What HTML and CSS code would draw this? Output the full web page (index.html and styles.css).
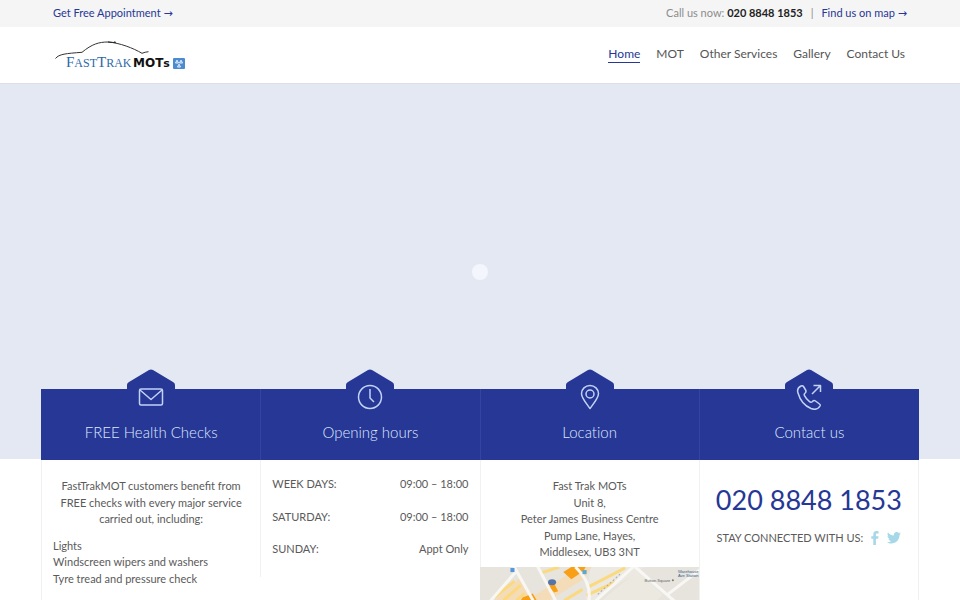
FILE: index.html
```html
<!DOCTYPE html>
<html lang="en">
<head>
<meta charset="utf-8">
<meta name="viewport" content="width=device-width, initial-scale=1">
<title>Fast Trak MOTs</title>
<link rel="stylesheet" href="styles.css">
</head>
<body>
<div class="topbar">
  <div class="wrap topbar-row">
    <a href="#appointment">Get Free Appointment <span class="arrow">→</span></a>
    <div class="topbar-right">
      <span>Call us now: <strong>020 8848 1853</strong></span>
      <span class="divider">|</span>
      <a href="#map">Find us on map <span class="arrow">→</span></a>
    </div>
  </div>
</div>
<header class="header">
  <div class="wrap header-row">
    <a class="logo" href="#home" aria-label="FastTrak MOTs">
      <svg width="134" height="32" viewBox="0 0 134 32">
        <path d="M1.500 19.500C5 15 12 14.500 28 13.300C38 5 45 3 54 3C66 4 79 9 88 14.300Q91 13 94.500 12.700" fill="none" stroke="#333" stroke-width="1"/>
        <path d="M54 2.500l6 .5 1-1 1 2-8-.5z" fill="#222"/>
        <text class="logo-serif" x="12" y="28"><tspan class="logo-cap">F</tspan>AST<tspan class="logo-cap">T</tspan>RAK</text>
        <text class="logo-sans" x="79" y="28">MOT<tspan class="logo-small">s</tspan></text>
        <rect x="119" y="19" width="12" height="11" rx="1" fill="#4b8bd0"/>
        <path d="M121.500 24l1.500-2.800 1.500 2.800zM125.500 24l1.500-2.800 1.500 2.800zM123.500 28l1.500-2.800 1.500 2.800z" fill="none" stroke="#fff" stroke-width=".9"/>
      </svg>
    </a>
    <nav class="nav">
      <a class="active" href="#home">Home</a>
      <a href="#mot">MOT</a>
      <a href="#services">Other Services</a>
      <a href="#gallery">Gallery</a>
      <a href="#contact">Contact Us</a>
    </nav>
  </div>
</header>
<div class="hero"><span class="loader"></span></div>
<main class="cards">
  <section class="card">
    <div class="card-head">
      <svg class="hex" width="50" height="40" viewBox="0 0 50 40"><path d="M1 40V16q0-2 2-3L23 1q2-1 4 0l20 12q2 1 2 3v24z"/></svg>
      <svg class="icon" width="26" height="26" viewBox="0 0 26 26"><rect x="1.500" y="5" width="23" height="16" rx="1.500"/><path d="M2 6l11 9.500L24 6"/></svg>
      <h2>FREE Health Checks</h2>
    </div>
    <div class="card-body">
      <p class="centered intro">FastTrakMOT customers benefit from FREE checks with every major service carried out, including:</p>
      <p class="list">Lights<br>Windscreen wipers and washers<br>Tyre tread and pressure check</p>
    </div>
  </section>
  <section class="card card-short">
    <div class="card-head">
      <svg class="hex" width="50" height="40" viewBox="0 0 50 40"><path d="M1 40V16q0-2 2-3L23 1q2-1 4 0l20 12q2 1 2 3v24z"/></svg>
      <svg class="icon" width="26" height="26" viewBox="0 0 26 26"><circle cx="13" cy="13" r="11.500"/><path d="M13 5v9l4 4"/></svg>
      <h2>Opening hours</h2>
    </div>
    <table class="hours">
      <tr><th scope="row">WEEK DAYS:</th><td>09:00 – 18:00</td></tr>
      <tr><th scope="row">SATURDAY:</th><td>09:00 – 18:00</td></tr>
      <tr><th scope="row">SUNDAY:</th><td>Appt Only</td></tr>
    </table>
  </section>
  <section class="card">
    <div class="card-head">
      <svg class="hex" width="50" height="40" viewBox="0 0 50 40"><path d="M1 40V16q0-2 2-3L23 1q2-1 4 0l20 12q2 1 2 3v24z"/></svg>
      <svg class="icon" width="26" height="26" viewBox="0 0 26 26"><path d="M13 24.500C9 19 4.500 14 4.500 9.500a8.500 8 0 0 1 17 0C21.500 14 17 19 13 24.500z"/><circle cx="13" cy="10" r="4"/></svg>
      <h2>Location</h2>
    </div>
    <address class="card-body centered">Fast Trak MOTs<br>Unit 8,<br>Peter James Business Centre<br>Pump Lane, Hayes,<br>Middlesex, UB3 3NT</address>
    <svg class="map" viewBox="0 0 220 33" preserveAspectRatio="xMidYMin slice">
      <rect width="220" height="60" fill="#e6e4dc"/>
      <path d="M111 0h53l-50 33h-8z" fill="#ebe9e2"/>
      <path d="M122 33L158 3l24 24-6 6z" fill="#ece9e1"/>
      <path d="M16 33L42 10 56 33zM48 33L100 0h12l-8 12-34 21z" fill="#f5dcb8"/>
      <path d="M16 30L36 14M25 33L42 18M38 33l8-7M62 6L80 0M85 33l18-11M108 20l37-19M107 28l28-13" stroke="#fbd97f" stroke-width="3"/>
      <path d="M84 5L92 0h14l-2 4-12 8zM68 17l6-3 5 10-4 1zM44 30l10-4 4 7H42z" fill="#f99f16"/>
      <path d="M10 36L38 4 35-2M38 4L56 36M58-2L78 36M96 0C104 8 112 18 109 36M113 36L155-2M155 0L194 34M187 27L222 0" fill="none" stroke="#f8f7f3" stroke-width="3"/>
      <path d="M118 27L140 7" stroke="#aaa" stroke-width="1" stroke-dasharray="2 2"/>
      <rect x="32" y="1" width="4" height="4" fill="#5596da"/><rect x="103" y="3" width="4" height="4" fill="#5ba9ce"/>
      <ellipse cx="73" cy="15" rx="4" ry="3" fill="#5475aa"/>
      <circle cx="192" cy="13" r="1" fill="#777"/>
      <text class="map-text" x="164" y="15">Button Square</text>
      <text class="map-text station" x="197" y="6">Warehouse</text>
      <text class="map-text station" x="197" y="10">Ave Station</text>
    </svg>
  </section>
  <section class="card">
    <div class="card-head">
      <svg class="hex" width="50" height="40" viewBox="0 0 50 40"><path d="M1 40V16q0-2 2-3L23 1q2-1 4 0l20 12q2 1 2 3v24z"/></svg>
      <svg class="icon" width="26" height="26" viewBox="0 0 26 26"><path d="M5 2C2 3.500 1 6 2 9c2 7 7 13 13 15.500 4 1.500 7 1 9-2.500.5-1 .2-1.500-.5-2l-4-3c-1-.7-2-.7-3 .5-1 1-2 1-3 .2-2-1.500-4-4-5-6-.5-1-.3-2 .7-2.700 1-1 1-2 .4-3L7.500 2.500C7 1.700 6 1.500 5 2zM16 10L24 2M17.500 1.500H24.500V8"/></svg>
      <h2>Contact us</h2>
    </div>
    <div class="contact">
      <p class="phone">020 8848 1853</p>
      <div class="social">
        <span>STAY CONNECTED WITH US:</span>
        <a href="#facebook" aria-label="Facebook"><svg width="8" height="14" viewBox="0 0 8 14"><path d="M2.300 14V7.700H.3V5.200h2V3.500C2.300 1.200 3.500.1 5.400.1L7.600.2v2.300H6.100c-1 0-1.200.5-1.200 1.200v1.500h2.600l-.4 2.500H4.900V14z"/></svg></a>
        <a href="#twitter" aria-label="Twitter"><svg width="14" height="12" viewBox="0 0 14 12"><path d="M14 1.600l-1.500 1.500C12.500 8.500 8.500 11.500 4.500 11.500 2.800 11.500 1.200 11 0 10.200c1.600.1 3-.3 4.200-1.200-1.300 0-2.300-.9-2.700-2h1.300C1.400 6.700.5 5.500.5 4.100l1.300.4C.5 3.500.1 1.900 1 .5c1.500 1.800 3.500 2.900 5.900 3C6.400 1.600 7.800 0 9.700 0c.8 0 1.600.3 2.100.9L13.600.2l-1.300 1.700z"/></svg></a>
      </div>
    </div>
  </section>
</main>
</body>
</html>
```
FILE: styles.css
```css
* { box-sizing: border-box; }
body {
  margin: 0;
  height: 100vh;
  overflow: hidden;
  display: flex;
  flex-direction: column;
  background: #fff;
  color: #5a5a5a;
  font: 11px/1.5 Lato, "Liberation Sans", sans-serif;
}
a { color: #263795; text-decoration: none; }
p, h2 { margin: 0; }
.wrap { width: 100%; max-width: 878px; margin: 0 auto; padding: 0 12px; }
.topbar { background: #f5f5f5; color: #8c8c8c; }
.topbar-row { display: flex; align-items: center; justify-content: space-between; height: 27px; }
.topbar-right { display: flex; gap: 8px; }
.topbar strong { color: #222; }
.topbar .divider { color: #8c8c8c; }
.arrow { font-family: "DejaVu Sans", sans-serif; line-height: 1; }
.header { border-bottom: 1px solid #dcdfe8; }
.header-row { display: flex; align-items: center; justify-content: space-between; height: 56px; padding-right: 14px; }
.logo { display: flex; padding-left: 1px; }
.logo-serif { font: 12px "Liberation Serif", serif; fill: #2c68a8; }
.logo-cap { font-size: 15px; }
.logo-sans { font: bold 12px "DejaVu Sans", sans-serif; fill: #111; }
.logo-small { font-size: 11px; }
.nav { display: flex; gap: 16px; padding-bottom: 2px; font-size: 12px; line-height: 17px; }
.nav a { color: #555; border-bottom: 1px solid transparent; }
.nav .active { color: #263795; border-color: #263795; }
.hero { flex: none; height: 375px; background: #e3e8f3; display: flex; justify-content: center; align-items: center; }
.loader { width: 16px; height: 16px; border-radius: 50%; background: #f3f6fc; }
.cards {
  position: relative;
  flex: 1;
  width: 100%;
  max-width: 878px;
  margin: -70px auto 0;
  display: grid;
  grid-template-columns: repeat(4, 1fr);
  border-right: 1px solid #f1f1f1;
}
.card { display: flex; flex-direction: column; border-left: 1px solid #f1f1f1; }
.card-short { align-self: start; padding-bottom: 3px; }
.card-head {
  position: relative;
  height: 71px;
  margin-left: -1px;
  border-left: 1px solid #34459f;
  background: #263795;
  display: flex;
  flex-direction: column;
  align-items: center;
  gap: 12px;
  padding-top: 8px;
}
.card:first-child .card-head { border-color: #263795; }
.card:last-child .card-head { margin-right: -1px; }
.hex { position: absolute; top: -20px; left: 50%; margin-left: -25px; fill: #263795; }
.icon { position: relative; margin-top: -13px; flex: none; fill: none; stroke: #c3d2f7; stroke-width: 1.5; stroke-linejoin: round; }
.card-head h2 { color: #dfe8ff; font-size: 15px; font-weight: 300; line-height: 20px; font-variant-ligatures: none; }
.card-body { padding: 18px 11px 6px; font-style: normal; }
.centered { text-align: center; }
.intro { margin-bottom: 10px; }
.hours { margin: 16px 11px 0 11px; border-collapse: collapse; }
.hours th, .hours td { padding: 0 0 16px; font-weight: 400; text-align: left; }
.hours td { text-align: right; }
.map { display: block; margin-left: -1px; flex: 1; min-height: 0; }
.map-text { font: 4px "Liberation Sans", sans-serif; fill: #666; }
.station { fill: #345d8b; }
.contact { padding: 20px 10px; text-align: center; }
.phone { color: #263795; font-size: 27px; line-height: 40px; }
.social { display: flex; justify-content: center; align-items: center; gap: 8px; padding-top: 10px; }
.social a { display: flex; }
.social svg { fill: #a6d8e8; }
```
